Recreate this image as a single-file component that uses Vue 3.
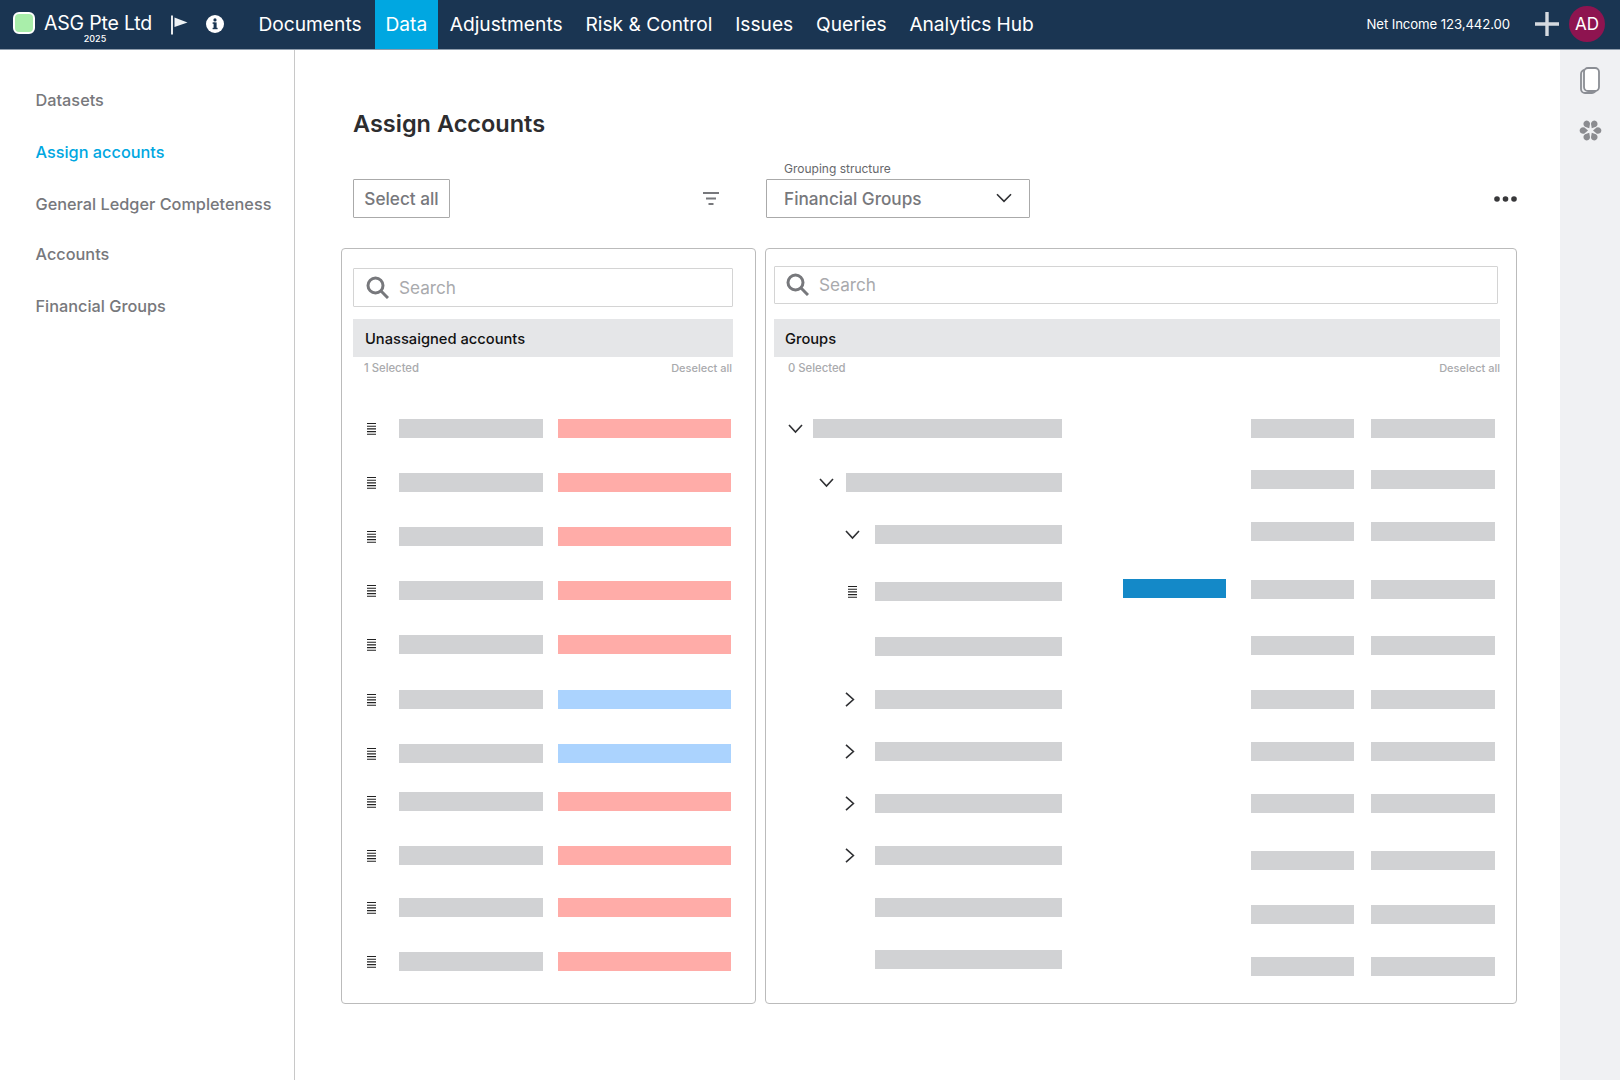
<script setup>
const navItems = ['Documents', 'Data', 'Adjustments', 'Risk & Control', 'Issues', 'Queries', 'Analytics Hub']
const sideItems = [
  { label: 'Datasets', top: 40 },
  { label: 'Assign accounts', top: 32, active: true },
  { label: 'General Ledger Completeness', top: 32 },
  { label: 'Accounts', top: 30 },
  { label: 'Financial Groups', top: 32 }
]
const leftTops = [419, 473, 527, 581, 635, 690, 744, 792, 846, 898, 952]
const leftBlue = [5, 6]
const leftRows = leftTops.map((y, i) => ({
  gap: i === 0 ? 38 : y - leftTops[i - 1] - 19,
  blue: leftBlue.includes(i)
}))
const treeData = [
  { y: 419, icon: 'down', iconX: 788, barX: 813 },
  { y: 473, icon: 'down', iconX: 819, barX: 846 },
  { y: 525, icon: 'down', iconX: 845, barX: 875 },
  { y: 582, icon: 'list', iconX: 848, barX: 875 },
  { y: 637, icon: '', iconX: 845, barX: 875 },
  { y: 690, icon: 'right', iconX: 845, barX: 875 },
  { y: 742, icon: 'right', iconX: 845, barX: 875 },
  { y: 794, icon: 'right', iconX: 845, barX: 875 },
  { y: 846, icon: 'right', iconX: 845, barX: 875 },
  { y: 898, icon: '', iconX: 845, barX: 875 },
  { y: 950, icon: '', iconX: 845, barX: 875 }
]
const treeRows = treeData.map((r, i) => ({
  ...r,
  gap: i === 0 ? 38 : r.y - treeData[i - 1].y - 19,
  pad: r.iconX - 774,
  slot: r.barX - r.iconX,
  width: 1062 - r.barX
}))
const valueTops = [419, 470, 522, 580, 636, 690, 742, 794, 851, 905, 957]
const valueRows = valueTops.map((y, i) => ({ gap: i === 0 ? 38 : y - valueTops[i - 1] - 19 }))
const petals = [30, 90, 150, 210, 270, 330]
</script>

<template>
  <div class="page">
    <header class="nav">
      <div class="brand">
        <span class="logo"></span>
        <div class="company">
          <span class="company-name">ASG Pte Ltd</span>
          <span class="company-year">2025</span>
        </div>
        <svg class="flag" width="17" height="20" viewBox="0 0 17 20">
          <path d="M1 0.5V19.5" stroke="#fff" stroke-width="1.8" fill="none" />
          <path d="M3.5 2.5L16.5 7.5L3.5 12Z" fill="#eef2f5" />
        </svg>
        <svg class="info" width="18" height="18" viewBox="0 0 18 18">
          <circle cx="9" cy="9" r="9" fill="#fff" />
          <rect x="7.6" y="7.4" width="3" height="6.6" fill="#1a3552" />
          <rect x="6.6" y="7.4" width="2" height="1.4" fill="#1a3552" />
          <rect x="6.6" y="12.8" width="5" height="1.4" fill="#1a3552" />
          <circle cx="9" cy="4.9" r="1.6" fill="#1a3552" />
        </svg>
      </div>
      <nav class="menu">
        <a v-for="item in navItems" :key="item" class="menu-item" :class="{ 'menu-active': item === 'Data' }">{{ item }}</a>
      </nav>
      <div class="nav-right">
        <span class="income">Net Income 123,442.00</span>
        <svg class="plus" width="24" height="24" viewBox="0 0 24 24">
          <path d="M12 0V24M0 12H24" stroke="#d5dae0" stroke-width="3.4" fill="none" />
        </svg>
        <span class="avatar">AD</span>
      </div>
    </header>

    <div class="body">
      <aside class="side">
        <a
          v-for="item in sideItems"
          :key="item.label"
          class="side-item"
          :class="{ 'side-active': item.active }"
          :style="{ marginTop: item.top + 'px' }"
        >{{ item.label }}</a>
      </aside>

      <main class="main">
        <h1 class="title">Assign Accounts</h1>
        <div class="toolbar">
          <button class="select-all">Select all</button>
          <svg class="filter" width="16" height="13" viewBox="0 0 16 13">
            <path d="M0 1H16M3 6.5H13M5.5 12H10.5" stroke="#77787c" stroke-width="2" fill="none" />
          </svg>
          <div class="group-field">
            <label class="group-label">Grouping structure</label>
            <div class="dropdown">
              <span>Financial Groups</span>
              <svg width="16" height="10" viewBox="0 0 16 10">
                <path d="M1 1.2L8 8.4L15 1.2" stroke="#2f3033" stroke-width="1.6" fill="none" />
              </svg>
            </div>
          </div>
          <svg class="dots" width="23" height="6" viewBox="0 0 23 6">
            <circle cx="3" cy="3" r="2.8" fill="#38383a" />
            <circle cx="11.5" cy="3" r="2.8" fill="#38383a" />
            <circle cx="20" cy="3" r="2.8" fill="#38383a" />
          </svg>
        </div>

        <div class="panels">
          <section class="panel panel-left">
            <div class="search search-left">
              <svg width="23" height="23" viewBox="0 0 23 23">
                <circle cx="9.5" cy="9.5" r="7.5" stroke="#77787c" stroke-width="3" fill="none" />
                <path d="M15 15L22 22" stroke="#77787c" stroke-width="3" fill="none" />
              </svg>
              <span>Search</span>
            </div>
            <div class="head head-left">Unassaigned accounts</div>
            <div class="meta meta-left">
              <span>1 Selected</span>
              <span class="deselect">Deselect all</span>
            </div>
            <div v-for="(row, i) in leftRows" :key="i" class="left-row" :style="{ marginTop: row.gap + 'px' }">
              <svg class="list-icon" width="9" height="12" viewBox="0 0 9 12">
                <path d="M0 .5H9M0 3.2H9M0 5.9H9M0 8.6H9M0 11.3H9" stroke="#222" stroke-width="1.1" fill="none" />
              </svg>
              <span class="bar bar-name"></span>
              <span class="bar bar-state" :class="{ 'bar-blue': row.blue }"></span>
            </div>
          </section>

          <section class="panel panel-right">
            <div class="search search-right">
              <svg width="23" height="23" viewBox="0 0 23 23">
                <circle cx="9.5" cy="9.5" r="7.5" stroke="#77787c" stroke-width="3" fill="none" />
                <path d="M15 15L22 22" stroke="#77787c" stroke-width="3" fill="none" />
              </svg>
              <span>Search</span>
            </div>
            <div class="head head-right">Groups</div>
            <div class="meta meta-right">
              <span>0 Selected</span>
              <span class="deselect">Deselect all</span>
            </div>
            <div class="tree">
              <div class="tree-col">
                <div
                  v-for="(row, i) in treeRows"
                  :key="i"
                  class="tree-row"
                  :style="{ marginTop: row.gap + 'px', paddingLeft: row.pad + 'px' }"
                >
                  <span class="tree-slot" :style="{ width: row.slot + 'px' }">
                    <svg v-if="row.icon === 'down'" width="15" height="10" viewBox="0 0 15 10">
                      <path d="M1 1L7.5 8L14 1" stroke="#2f3033" stroke-width="1.6" fill="none" />
                    </svg>
                    <svg v-else-if="row.icon === 'right'" width="10" height="15" viewBox="0 0 10 15">
                      <path d="M1 .8L8.4 7.5L1 14.2" stroke="#2f3033" stroke-width="1.6" fill="none" />
                    </svg>
                    <svg v-else-if="row.icon === 'list'" width="9" height="12" viewBox="0 0 9 12">
                      <path d="M0 .5H9M0 3.2H9M0 5.9H9M0 8.6H9M0 11.3H9" stroke="#222" stroke-width="1.1" fill="none" />
                    </svg>
                  </span>
                  <span class="bar" :style="{ width: row.width + 'px' }"></span>
                </div>
              </div>
              <div class="status-col">
                <span class="status-bar"></span>
              </div>
              <div class="value-col">
                <div v-for="(row, i) in valueRows" :key="i" class="value-row" :style="{ marginTop: row.gap + 'px' }">
                  <span class="bar bar-val-a"></span>
                  <span class="bar bar-val-b"></span>
                </div>
              </div>
            </div>
          </section>
        </div>
      </main>

      <aside class="rail">
        <svg class="rail-copy" width="20" height="27" viewBox="0 0 20 27">
          <rect x="1" y="3" width="15" height="23" rx="4" fill="#f0f1f3" stroke="#8b8e94" stroke-width="1.8" />
          <rect x="4" y="1" width="15" height="23" rx="4" fill="#fff" stroke="#8b8e94" stroke-width="1.8" />
        </svg>
        <svg class="rail-paw" width="23" height="21" viewBox="-11.5 -10.5 23 21">
          <path
            v-for="a in petals"
            :key="a"
            d="M0 -2.5L-2.9 -6A3.3 3.3 0 1 1 2.9 -6Z"
            fill="#8b8c90"
            :transform="`rotate(${a})`"
          />
        </svg>
      </aside>
    </div>
  </div>
</template>

<style>
html, body { margin: 0; background: #fff; }
</style>

<style scoped>
.page {
  width: 1620px;
  height: 1080px;
  overflow: hidden;
  display: flex;
  flex-direction: column;
  font-family: Inter, "Liberation Sans", sans-serif;
  color: #333;
}
.nav {
  flex: none;
  height: 49px;
  border-bottom: 1px solid #8f9dad;
  background: #1a3552;
  display: flex;
  align-items: stretch;
  color: #fff;
}
.brand {
  width: 247px;
  padding-left: 13px;
  box-sizing: border-box;
  display: flex;
  align-items: center;
}
.logo {
  width: 18px;
  height: 18px;
  background: #a9eeaa;
  border: 2px solid #fff;
  border-radius: 6px;
  margin-top: -3px;
}
.company {
  margin-left: 9px;
  width: 108px;
  display: flex;
  flex-direction: column;
  align-items: center;
  margin-top: 4px;
}
.company-name { font-size: 19.5px; line-height: 24px; white-space: nowrap; letter-spacing: -0.2px; }
.company-year { font-size: 9px; line-height: 9px; font-weight: 500; margin-left: -6px; margin-top: -1px; }
.flag { margin-left: 19px; }
.info { margin-left: 18px; margin-top: -2px; }
.menu { display: flex; }
.menu-item {
  display: flex;
  align-items: center;
  padding: 0 11.4px 2px;
  font-size: 19.2px;
  white-space: nowrap;
}
.menu-item:last-child { letter-spacing: -0.15px; }
.menu-active { background: #00a7e1; padding: 0 11px 2px; margin-left: 1.5px; }
.nav-right {
  margin-left: auto;
  display: flex;
  align-items: center;
  padding: 0 15px 1px 0;
}
.income { font-size: 13.2px; letter-spacing: -0.1px; }
.plus { margin-left: 25px; }
.avatar {
  margin-left: 10px;
  width: 36px;
  height: 36px;
  border-radius: 50%;
  background: #8e1450;
  display: flex;
  align-items: center;
  justify-content: center;
  font-size: 17px;
}
.body { flex: 1; display: flex; min-height: 0; }
.side {
  flex: none;
  width: 258.5px;
  border-right: 1px solid #c8c8c8;
  padding-left: 35.5px;
  display: flex;
  flex-direction: column;
}
.side-item {
  font-size: 16.3px;
  line-height: 20px;
  font-weight: 500;
  color: #77787c;
  white-space: nowrap;
}
.side-active { color: #00a7e1; }
.main {
  flex: 1;
  min-width: 0;
  padding: 0 43px 0 46px;
}
.title {
  margin: 59px 0 0 12px;
  font-size: 23.5px;
  line-height: 30px;
  font-weight: 600;
  color: #2d2d2f;
}
.toolbar {
  margin: 40px 0 0 12px;
  height: 39px;
  display: flex;
  align-items: center;
  position: relative;
}
.select-all {
  width: 97px;
  height: 39px;
  box-sizing: border-box;
  border: 1px solid #aaa;
  border-radius: 1px;
  background: #fff;
  color: #77787c;
  font: 500 17.2px Inter, "Liberation Sans", sans-serif;
  padding: 0 0 1px;
}
.filter { margin-left: 253px; }
.group-field { margin-left: 47px; position: relative; }
.group-label {
  position: absolute;
  left: 18px;
  top: -18px;
  font-size: 12px;
  line-height: 16px;
  color: #66676b;
  white-space: nowrap;
}
.dropdown {
  width: 264px;
  height: 39px;
  box-sizing: border-box;
  border: 1px solid #aaa;
  border-radius: 1px;
  display: flex;
  align-items: center;
  justify-content: space-between;
  padding: 0 17px 1px;
  color: #77787c;
  font-size: 17.2px;
  font-weight: 500;
}
.dots { margin-left: auto; }
.panels { display: flex; gap: 9px; margin-top: 30px; }
.panel {
  height: 756px;
  box-sizing: border-box;
  border: 1px solid #bbb;
  border-radius: 4px;
  background: #fff;
}
.panel-left { width: 415px; padding-left: 11px; }
.panel-right { width: 752px; padding-left: 8px; }
.search {
  box-sizing: border-box;
  border: 1px solid #d4d4d4;
  border-radius: 1px;
  display: flex;
  align-items: center;
  padding-bottom: 1px;
  color: #a9aaad;
  font-size: 17.2px;
}
.search svg { margin: 0 10px 0 12px; }
.search-left { width: 380px; height: 39px; margin-top: 19px; }
.search-right { width: 724px; height: 38px; margin-top: 17px; }
.search-right svg { margin-left: 11px; }
.head {
  height: 38px;
  background: #e5e6e8;
  display: flex;
  align-items: center;
  padding-top: 1px;
  font-size: 14.7px;
  font-weight: 500;
  color: #111;
  box-sizing: border-box;
}
.head-left { width: 380px; margin-top: 12px; padding-left: 12px; }
.head-right { width: 726px; margin-top: 15px; padding-left: 11px; }
.meta {
  height: 24px;
  display: flex;
  justify-content: space-between;
  padding-top: 4px;
  box-sizing: border-box;
  font-size: 11.3px;
  line-height: 14px;
  font-weight: 500;
  color: #a9aaad;
}
.meta-left { width: 379px; padding-left: 11px; }
.meta-right { width: 726px; padding-left: 14px; }
.deselect { font-size: 11px; }
.bar { display: block; flex: none; height: 19px; background: #d1d2d4; }
.left-row { display: flex; align-items: center; height: 19px; width: 378px; }
.list-icon { margin-left: 14px; }
.bar-name { width: 144px; margin-left: 23px; }
.bar-state { width: 173px; margin-left: 15px; background: #ffaca8; }
.bar-blue { background: #abd3fe; }
.tree { display: flex; }
.tree-col { width: 288px; flex: none; }
.tree-row { display: flex; align-items: center; height: 19px; }
.tree-slot { display: flex; align-items: center; flex: none; }
.status-col { width: 103px; margin-left: 61px; flex: none; padding-top: 198px; }
.status-bar { display: block; width: 103px; height: 19px; background: #1489c8; }
.value-col { margin-left: 25px; flex: none; }
.value-row { display: flex; gap: 17px; height: 19px; }
.bar-val-a { width: 103px; }
.bar-val-b { width: 124px; }
.rail {
  flex: none;
  width: 60px;
  background: #f0f1f3;
  display: flex;
  flex-direction: column;
  align-items: center;
}
.rail-copy { margin-top: 17px; }
.rail-paw { margin-top: 26px; }
</style>
